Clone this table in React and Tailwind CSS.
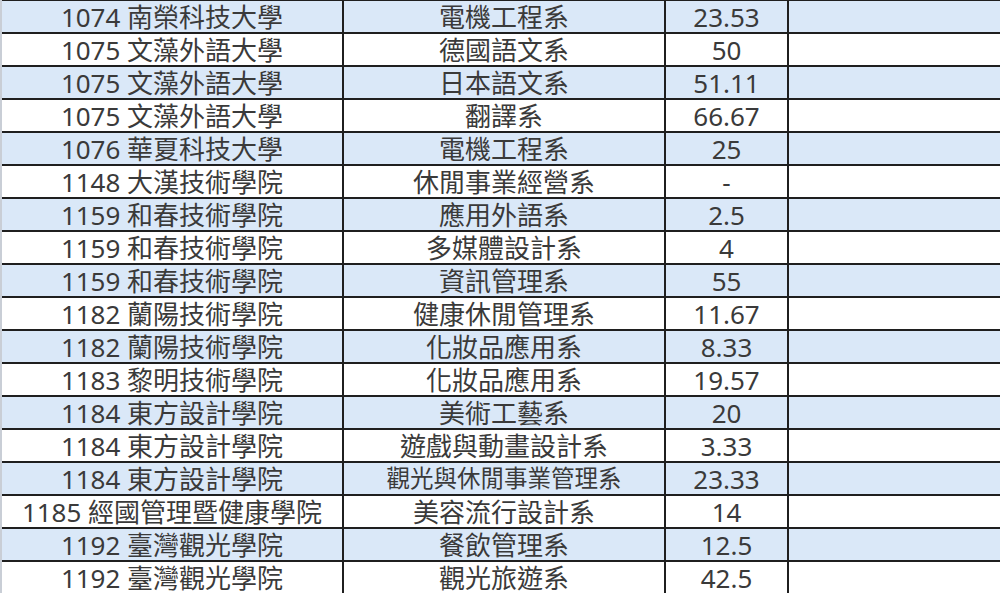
import React from 'react';

const rows = [
  ['1074 南榮科技大學', '電機工程系', '23.53'],
  ['1075 文藻外語大學', '德國語文系', '50'],
  ['1075 文藻外語大學', '日本語文系', '51.11'],
  ['1075 文藻外語大學', '翻譯系', '66.67'],
  ['1076 華夏科技大學', '電機工程系', '25'],
  ['1148 大漢技術學院', '休閒事業經營系', '-'],
  ['1159 和春技術學院', '應用外語系', '2.5'],
  ['1159 和春技術學院', '多媒體設計系', '4'],
  ['1159 和春技術學院', '資訊管理系', '55'],
  ['1182 蘭陽技術學院', '健康休閒管理系', '11.67'],
  ['1182 蘭陽技術學院', '化妝品應用系', '8.33'],
  ['1183 黎明技術學院', '化妝品應用系', '19.57'],
  ['1184 東方設計學院', '美術工藝系', '20'],
  ['1184 東方設計學院', '遊戲與動畫設計系', '3.33'],
  ['1184 東方設計學院', '觀光與休閒事業管理系', '23.33'],
  ['1185 經國管理暨健康學院', '美容流行設計系', '14'],
  ['1192 臺灣觀光學院', '餐飲管理系', '12.5'],
  ['1192 臺灣觀光學院', '觀光旅遊系', '42.5'],
];

const cell = 'flex items-center justify-center whitespace-nowrap border-r-2 border-[#1f1f1f]';

export default function App() {
  return (
    <div
      className="w-[1000px] h-[595px] overflow-hidden bg-white text-[#3a3a3a] font-normal"
      style={{ fontFamily: '"Noto Sans", "Noto Sans CJK TC", sans-serif' }}
    >
      <div className="-mt-px border-l-2 border-[#c9ced6]">
        {rows.map(([school, dept, score], i) => (
          <div
            key={i}
            className={`grid grid-cols-[342px_322px_123px_1fr] h-[33px] border-t-2 border-[#1f1f1f] text-[26px] leading-none ${
              i % 2 === 0 ? 'bg-[#dae8f8]' : 'bg-white'
            }`}
          >
            <div className={cell}>{school}</div>
            <div className={`${cell} ${dept.length > 9 ? 'text-[23.5px]' : ''}`}>{dept}</div>
            <div className={cell}>{score}</div>
            <div />
          </div>
        ))}
      </div>
    </div>
  );
}
